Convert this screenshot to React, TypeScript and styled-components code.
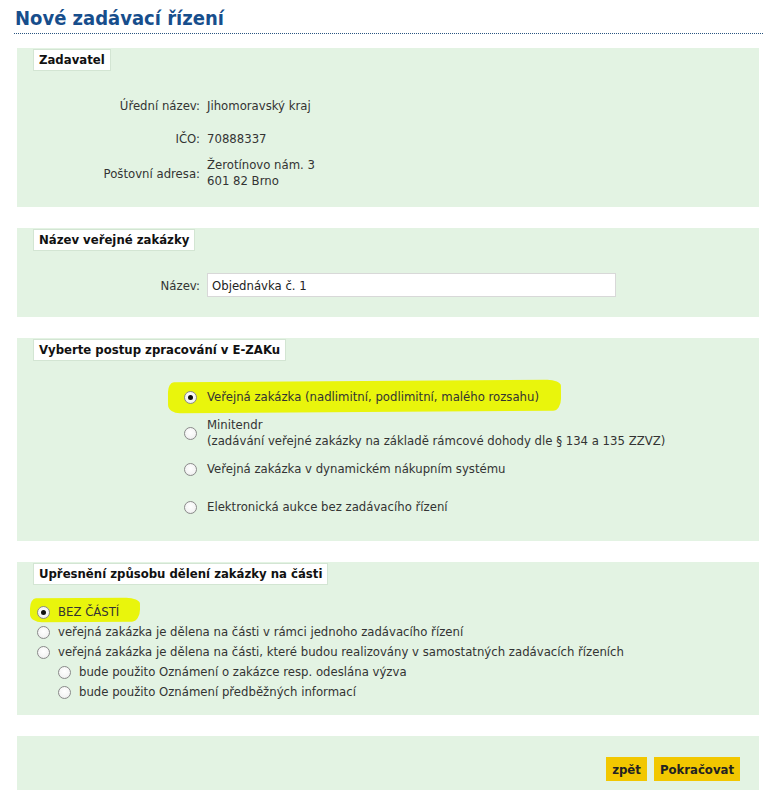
import React, { useState } from 'react';
import styled, { createGlobalStyle, css } from 'styled-components';

const GlobalStyle = createGlobalStyle`
  body {
    margin: 0;
    background: #ffffff;
    font-family: Tahoma, "DejaVu Sans Condensed", "DejaVu Sans", sans-serif;
    font-size: 13px;
    color: #222;
  }
`;

const App: React.FC = () => {
  const [postup, setPostup] = useState('vz');
  const [deleni, setDeleni] = useState('bez');

  return (
    <Page>
      <GlobalStyle />
      <Title>Nové zadávací řízení</Title>

      <Panel>
        <Legend>Zadavatel</Legend>
        <Fields>
          <FieldRow $h={33}>
            <FieldLabel>Úřední název:</FieldLabel>
            <FieldValue>Jihomoravský kraj</FieldValue>
          </FieldRow>
          <FieldRow $h={33}>
            <FieldLabel>IČO:</FieldLabel>
            <FieldValue>70888337</FieldValue>
          </FieldRow>
          <FieldRow $h={36}>
            <FieldLabel>Poštovní adresa:</FieldLabel>
            <FieldValue>
              Žerotínovo nám. 3
              <br />
              601 82 Brno
            </FieldValue>
          </FieldRow>
        </Fields>
      </Panel>

      <Panel $bottom={20}>
        <Legend>Název veřejné zakázky</Legend>
        <Fields $top={22}>
          <FieldRow $h={24}>
            <FieldLabel>Název:</FieldLabel>
            <TextInput defaultValue="Objednávka č. 1" />
          </FieldRow>
        </Fields>
      </Panel>

      <Panel $bottom={26}>
        <Legend>Vyberte postup zpracování v E-ZAKu</Legend>
        <ProcessList>
          <ProcessOption $marked>
            <Radio name="postup" checked={postup === 'vz'} onChange={() => setPostup('vz')} />
            <span>Veřejná zakázka (nadlimitní, podlimitní, malého rozsahu)</span>
          </ProcessOption>
          <ProcessOption>
            <Radio name="postup" checked={postup === 'mt'} onChange={() => setPostup('mt')} />
            <span>
              Minitendr
              <br />
              (zadávání veřejné zakázky na základě rámcové dohody dle § 134 a 135 ZZVZ)
            </span>
          </ProcessOption>
          <ProcessOption>
            <Radio name="postup" checked={postup === 'dns'} onChange={() => setPostup('dns')} />
            <span>Veřejná zakázka v dynamickém nákupním systému</span>
          </ProcessOption>
          <ProcessOption $extra={10}>
            <Radio name="postup" checked={postup === 'ea'} onChange={() => setPostup('ea')} />
            <span>Elektronická aukce bez zadávacího řízení</span>
          </ProcessOption>
        </ProcessList>
      </Panel>

      <Panel $bottom={13}>
        <Legend>Upřesnění způsobu dělení zakázky na části</Legend>
        <PartsList>
          <PartOption $marked>
            <Radio name="deleni" checked={deleni === 'bez'} onChange={() => setDeleni('bez')} />
            <span>BEZ ČÁSTÍ</span>
          </PartOption>
          <PartOption>
            <Radio name="deleni" checked={deleni === 'jedno'} onChange={() => setDeleni('jedno')} />
            <span>veřejná zakázka je dělena na části v rámci jednoho zadávacího řízení</span>
          </PartOption>
          <PartOption>
            <Radio name="deleni" checked={deleni === 'samo'} onChange={() => setDeleni('samo')} />
            <span>veřejná zakázka je dělena na části, které budou realizovány v samostatných zadávacích řízeních</span>
          </PartOption>
          <PartOption $nested>
            <Radio name="oznameni" />
            <span>bude použito Oznámení o zakázce resp. odeslána výzva</span>
          </PartOption>
          <PartOption $nested>
            <Radio name="oznameni" />
            <span>bude použito Oznámení předběžných informací</span>
          </PartOption>
        </PartsList>
      </Panel>

      <ButtonPanel>
        <ActionButton>zpět</ActionButton>
        <ActionButton>Pokračovat</ActionButton>
      </ButtonPanel>
    </Page>
  );
};

const Page = styled.div`
  padding: 6px 16px 0 17px;
`;

const Title = styled.h1`
  margin: 0 -4px 14px -3px;
  padding: 0 0 3px 1px;
  font-size: 20px;
  line-height: 24px;
  font-weight: bold;
  color: #174e8c;
  border-bottom: 1px dotted #2a5580;
`;

const Panel = styled.section<{ $bottom?: number }>`
  background: #e3f3e3;
  padding: 1px 0 ${p => p.$bottom ?? 16}px 16px;
  margin-bottom: 21px;
`;

const Legend = styled.div`
  display: inline-block;
  height: 20px;
  line-height: 20px;
  padding: 0 5px;
  background: #ffffff;
  border: 1px solid #d3e5d3;
  font-weight: bold;
  color: #111;
`;

const Fields = styled.div<{ $top?: number }>`
  display: flex;
  flex-direction: column;
  margin-top: ${p => p.$top ?? 18}px;
`;

const FieldRow = styled.div<{ $h: number }>`
  display: grid;
  grid-template-columns: 167px 1fr;
  column-gap: 7px;
  align-items: center;
  min-height: ${p => p.$h}px;
`;

const FieldLabel = styled.div`
  text-align: right;
  color: #333;
`;

const FieldValue = styled.div`
  line-height: 16px;
  color: #333;
`;

const TextInput = styled.input`
  box-sizing: border-box;
  width: 409px;
  height: 24px;
  padding: 0 4px;
  border: 1px solid #d8d8d8;
  background: #fff;
  font: inherit;
  font-size: 13px;
  color: #222;
  outline: none;
`;

const Radio = styled.input.attrs({ type: 'radio' })`
  appearance: none;
  margin: 0;
  flex: none;
  width: 13px;
  height: 13px;
  border-radius: 50%;
  border: 1px solid #8a8a8a;
  background: radial-gradient(circle at 50% 40%, #ffffff 0%, #f4f4f4 60%, #e0e0e0 100%);
  box-sizing: border-box;
  display: grid;
  place-items: center;

  &:checked::after {
    content: '';
    width: 5px;
    height: 5px;
    border-radius: 50%;
    background: #111;
  }
`;

const marker = css`
  position: relative;
  z-index: 0;

  &::before {
    content: '';
    position: absolute;
    z-index: -1;
    background: #e9f50c;
    border-radius: 6px 14px 8px 12px / 10px 6px 12px 8px;
    transform: rotate(-0.4deg);
  }
`;

const ProcessList = styled.div`
  display: flex;
  flex-direction: column;
  gap: 12px;
  margin-top: 28px;
  padding-left: 151px;
`;

const ProcessOption = styled.label<{ $marked?: boolean; $extra?: number }>`
  display: flex;
  align-items: center;
  gap: 10px;
  line-height: 16px;
  color: #333;
  margin-top: ${p => p.$extra ?? 0}px;
  ${p =>
    p.$marked &&
    css`
      ${marker}
      &::before {
        left: -16px;
        width: 393px;
        top: -8px;
        bottom: -7px;
      }
    `}
`;

const PartsList = styled.div`
  display: flex;
  flex-direction: column;
  margin-top: 17px;
  padding-left: 4px;
`;

const PartOption = styled.label<{ $marked?: boolean; $nested?: boolean }>`
  display: flex;
  align-items: center;
  gap: 8px;
  line-height: 20px;
  color: #333;
  padding-left: ${p => (p.$nested ? 21 : 0)}px;
  ${p =>
    p.$marked &&
    css`
      ${marker}
      align-self: flex-start;
      &::before {
        left: -7px;
        width: 110px;
        top: -4px;
        bottom: 0;
      }
    `}
`;

const ButtonPanel = styled.div`
  display: flex;
  justify-content: flex-end;
  gap: 7px;
  background: #e3f3e3;
  padding: 21px 19px 21px 16px;
`;

const ActionButton = styled.button`
  height: 24px;
  padding: 0 6px;
  border: none;
  background: #f2c700;
  font: inherit;
  font-size: 13px;
  font-weight: bold;
  color: #222;
  cursor: pointer;
`;

export default App;
